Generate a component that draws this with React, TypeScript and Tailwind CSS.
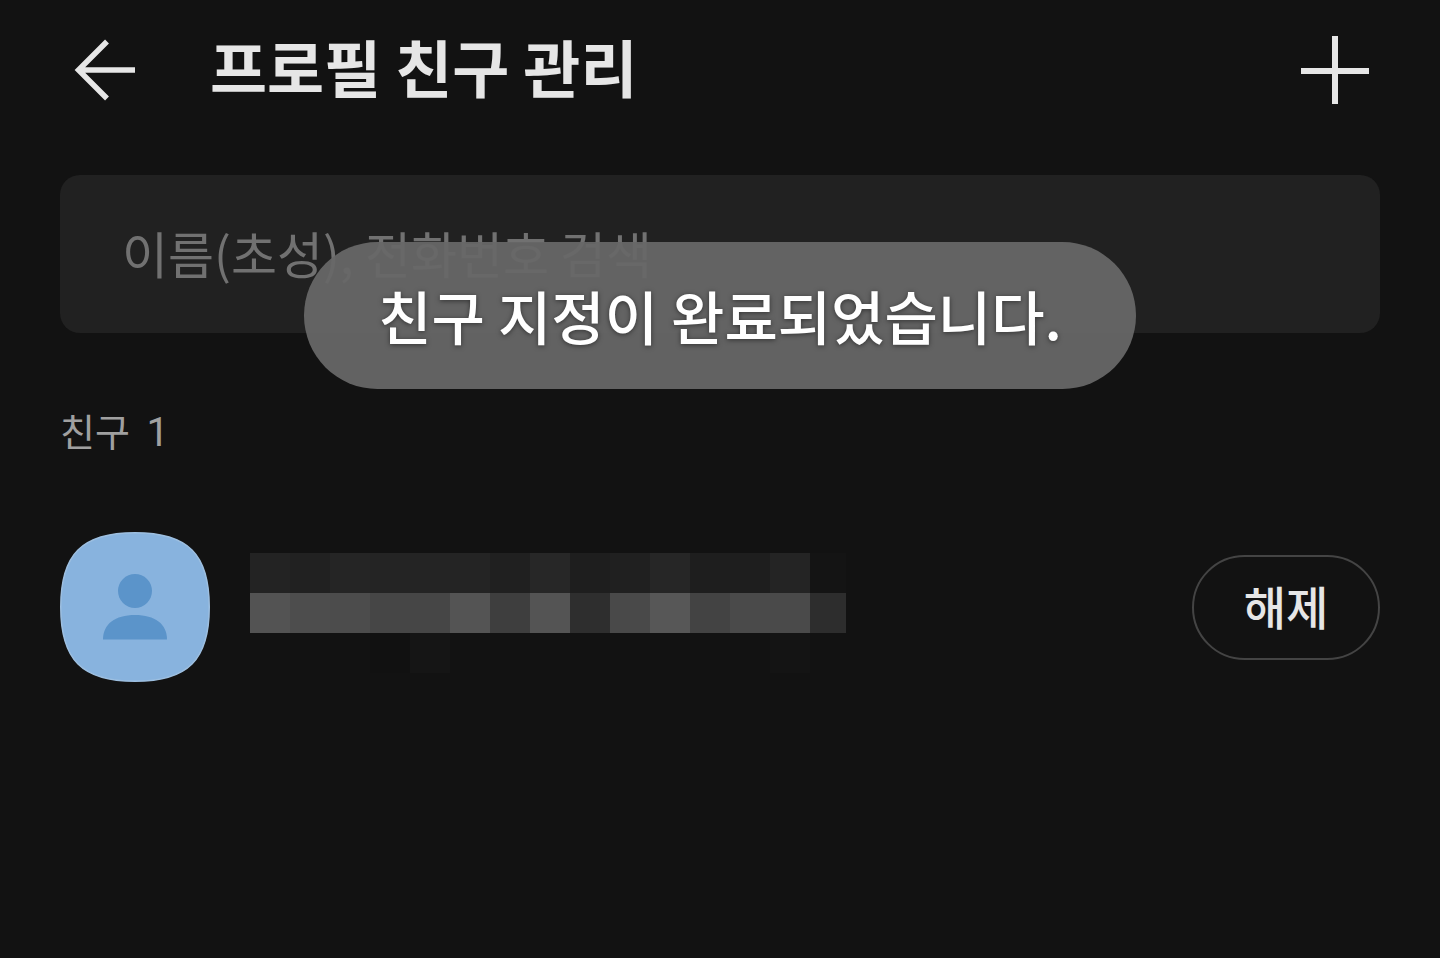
const nameMosaic = [
  ['bg-[#232323]', 'bg-[#212121]', 'bg-[#252525]', 'bg-[#242424]', 'bg-[#242424]', 'bg-[#242424]', 'bg-[#202020]', 'bg-[#272727]', 'bg-[#1e1e1e]', 'bg-[#202020]', 'bg-[#262626]', 'bg-[#1e1e1e]', 'bg-[#1e1e1e]', 'bg-[#242424]', 'bg-[#141414]'],
  ['bg-[#535353]', 'bg-[#4d4d4d]', 'bg-[#4c4c4c]', 'bg-[#464646]', 'bg-[#464646]', 'bg-[#545454]', 'bg-[#3e3e3e]', 'bg-[#545454]', 'bg-[#2e2e2e]', 'bg-[#494949]', 'bg-[#575757]', 'bg-[#434343]', 'bg-[#4a4a4a]', 'bg-[#4a4a4a]', 'bg-[#2d2d2d]'],
  ['bg-[#121212]', 'bg-[#121212]', 'bg-[#121212]', 'bg-[#111111]', 'bg-[#151515]', 'bg-[#121212]', 'bg-[#121212]', 'bg-[#121212]', 'bg-[#121212]', 'bg-[#121212]', 'bg-[#121212]', 'bg-[#121212]', 'bg-[#121212]', 'bg-[#141414]', 'bg-[#121212]'],
]

function BackIcon() {
  return (
    <svg width="62" height="62" viewBox="0 0 62 62" fill="none" stroke="#e6e6e6" strokeWidth="5.5" aria-hidden="true">
      <path d="M61 31H5M33 2.5L4.5 31L33 59.5" />
    </svg>
  )
}

function PlusIcon() {
  return (
    <svg width="68" height="68" viewBox="0 0 68 68" fill="none" stroke="#e6e6e6" strokeWidth="6" aria-hidden="true">
      <path d="M34 0V68M0 35H68" />
    </svg>
  )
}

function Avatar() {
  return (
    <svg className="shrink-0" width="150" height="150" viewBox="0 0 150 150" role="img" aria-label="프로필 사진">
      <path
        d="M75 .75C128 .75 149.25 22 149.25 75S128 149.25 75 149.25S.75 128 .75 75S22 .75 75 .75Z"
        fill="#88b3de"
        stroke="#9dbfe0"
        strokeWidth="1.5"
      />
      <circle cx="75" cy="59" r="17" fill="#5b94ca" />
      <path d="M43 107.5C43 92 55 83 75 83S107 92 107 107.5Z" fill="#5b94ca" />
    </svg>
  )
}

function HiddenName() {
  return (
    <div role="img" aria-label="가려진 이름" className="mt-3 w-[596px] overflow-hidden">
      {nameMosaic.map((row, y) => (
        <div key={y} className="flex">
          {row.map((color, x) => (
            <span key={x} className={`h-10 w-10 shrink-0 ${color}`} />
          ))}
        </div>
      ))}
    </div>
  )
}

function Toast({ message }: { message: string }) {
  return (
    <div className="pointer-events-none absolute inset-x-0 top-[242px] flex justify-center">
      <p
        role="status"
        className="rounded-full bg-[#676767]/95 px-[74px] py-9 text-[58px] leading-[75px] font-medium whitespace-nowrap text-white [text-shadow:0_1px_5px_rgba(0,0,0,0.5)]"
      >
        {message}
      </p>
    </div>
  )
}

export default function App() {
  return (
    <div className="relative min-h-screen bg-[#121212] px-[60px] font-['Noto_Sans_CJK_KR',sans-serif] text-[#e6e6e6]">
      <header className="flex h-[140px] items-center pr-[11px] pl-[14px]">
        <button type="button" aria-label="뒤로">
          <BackIcon />
        </button>
        <h1 className="ml-[74px] flex-1 pb-2 text-[62px] leading-[80px] font-bold">프로필 친구 관리</h1>
        <button type="button" aria-label="친구 추가">
          <PlusIcon />
        </button>
      </header>

      <main>
        <input
          type="search"
          aria-label="친구 검색"
          placeholder="이름(초성), 전화번호 검색"
          className="mt-[35px] block h-[158px] w-full rounded-[20px] bg-[#212121] px-[62px] pb-1 text-[50px] text-[#e6e6e6] outline-none placeholder:text-[#717171]"
        />

        <h2 className="mt-[67px] text-[38px] leading-[60px] text-[#a0a0a0]">
          친구 <span className="ml-2 font-[Roboto,sans-serif] text-[40px]">1</span>
        </h2>

        <ul className="mt-[69px]">
          <li className="flex items-center gap-10">
            <Avatar />
            <HiddenName />
            <button
              type="button"
              className="ml-auto h-[105px] w-[188px] shrink-0 rounded-full border-2 border-[#444444] pb-1 text-[46px] font-medium"
            >
              해제
            </button>
          </li>
        </ul>
      </main>

      <Toast message="친구 지정이 완료되었습니다." />
    </div>
  )
}
